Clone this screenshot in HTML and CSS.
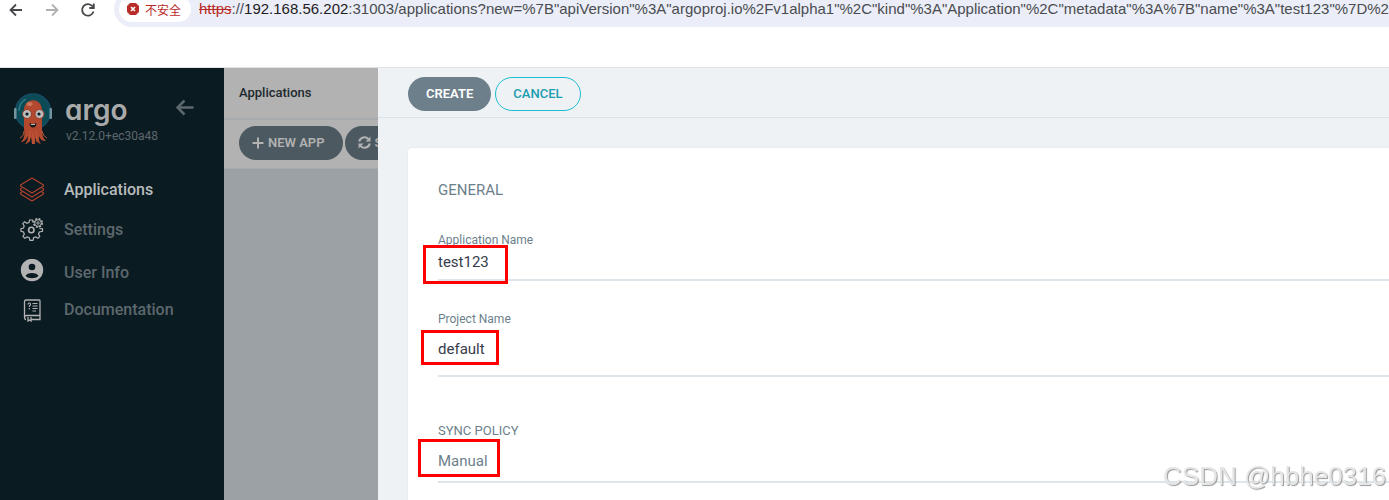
FILE: index.html
```html
<!DOCTYPE html>
<html lang="zh-CN">
<head>
<meta charset="utf-8">
<title>Applications</title>
<link rel="stylesheet" href="styles.css">
</head>
<body>

<header class="browser-bar">
  <div class="browser-nav">
    <button class="nav-btn" aria-label="Back"><svg width="16" height="16" viewBox="0 0 16 16"><path d="M14 8H3M8 2.500L2.500 8L8 13.500" /></svg></button>
    <button class="nav-btn nav-btn-off" aria-label="Forward"><svg width="16" height="16" viewBox="0 0 16 16"><path d="M2 8H13M8 2.500L13.500 8L8 13.500" /></svg></button>
    <button class="nav-btn" aria-label="Reload"><svg width="16" height="16" viewBox="0 0 16 16"><path d="M13.500 9.500A5.800 5.800 0 1 1 12.500 4.300L13.500 5.500M13.800 1.500V6H9.300" /></svg></button>
  </div>
  <div class="omnibox">
    <button class="security-chip">
      <svg width="12" height="12" viewBox="0 0 12 12"><path d="M3.600 0h4.800L12 3.600v4.800L8.400 12H3.600L0 8.400V3.600z" fill="#b92b27" stroke="#b92b27" stroke-linejoin="round"/><path d="M4 4l4 4M8 4l-4 4" stroke="#fff" stroke-width="1.600"/></svg>
      不安全
    </button>
    <div class="url"><s>https</s>://<b>192.168.56.202</b>:31003/applications?new=%7B"apiVersion"%3A"argoproj.io%2Fv1alpha1"%2C"kind"%3A"Application"%2C"metadata"%3A%7B"name"%3A"test123"%7D%2C</div>
  </div>
</header>

<div class="app">
  <aside class="sidebar">
    <div class="brand">
      <svg class="brand-logo" width="40" height="52" viewBox="0 0 40 52">
        <circle cx="20" cy="18.500" r="17.500" fill="#0b4b55" stroke="#174c64" stroke-width="1.500"/>
        <rect x="1" y="15" width="2.500" height="11" rx="1" fill="#7393a0"/>
        <rect x="36.500" y="15" width="2.500" height="11" rx="1" fill="#7393a0"/>
        <path d="M6 18C6 12 9 8 13 6" fill="none" stroke="#2d7880" stroke-width="1.500"/>
        <path d="M11 20C9 3 31 3 29 20L29 36C29 43 31 46 33 48C29 48 27 46 26 43C26 47 26 49 28 51C25 51 23 47 22.500 44L22 51H19L18 44C17 48 15 51 12 51C14 49 15 46 15 43C13 47 11 49 8 49C11 46 12 42 11 36Z" fill="#b2482d"/>
        <path d="M11 38C11 42 9 44 7 45M29 38C30 42 32 44 34 45M17 38L16 49M23 38L24 49M20 40V51" fill="none" stroke="#c15b3d" stroke-width="1"/>
        <ellipse cx="16.500" cy="11" rx="3" ry="2" fill="#c87659"/>
        <circle cx="14" cy="21" r="4.500" fill="#bbb" stroke="#963b27"/>
        <circle cx="26.500" cy="21" r="4.500" fill="#bbb" stroke="#963b27"/>
        <circle cx="14" cy="21" r="1.600" fill="#0b1b22"/>
        <circle cx="26" cy="21" r="1.600" fill="#0b1b22"/>
        <path d="M16.500 30Q20 32 23.500 30Q23 34.500 20 34.500T16.500 30Z" fill="#13191b"/>
        <path d="M18 31H22V32H18Z" fill="#b9b9b9"/>
      </svg>
      <div class="brand-text">
        <span class="brand-name">argo</span>
        <span class="brand-version">v2.12.0+ec30a48</span>
      </div>
      <button class="collapse" aria-label="Collapse"><svg width="18" height="16" viewBox="0 0 18 16"><path d="M17.500 7.500H2M8.500 0.500L1.500 7.500L8.500 14.500" fill="none" stroke="#5d686d" stroke-width="2.500"/></svg></button>
    </div>
    <nav class="menu">
      <a href="#" class="menu-item menu-item-active">
        <svg width="26" height="26" viewBox="0 0 26 26" fill="none" stroke="#b1442e" stroke-width="1.100" stroke-linejoin="round"><path d="M13 2L24.500 9V10L13 17L1.500 10V9ZM1.500 12.500V14L13 21L24.500 14V12.500M1.500 16.500V18L13 25L24.500 18V16.500M3 12L1.500 13M23 12L24.500 13M3 16L1.500 17M23 16L24.500 17"/></svg>
        Applications
      </a>
      <a href="#" class="menu-item">
        <svg width="26" height="26" viewBox="0 0 26 26" fill="none" stroke="#b3b3b3" stroke-width="1.200"><path d="M14 6.500L13.500 4H10.500L10 6.500L8 7.300L5.500 5.800L3.800 7.500L5.200 10L4.500 12L2 12.700V15.300L4.500 16L5.300 18.200L4 20.500L5.800 22.300L8.200 21L10.200 21.800L11 24.300H14L14.600 21.800L16.800 21L19 22.300L20.800 20.500L19.500 18.200L20.300 16L23.500 15.300V12.800L20.500 12.500"/><circle cx="12.300" cy="14" r="2.700" stroke-width="1.600"/><circle cx="19" cy="7" r="4.200" stroke-dasharray="2 1.300" stroke-width="1.600"/><circle cx="19" cy="7" r="3.300" stroke-width="1"/><circle cx="19" cy="7" r="1.200" stroke-width="1"/></svg>
        Settings
      </a>
      <a href="#" class="menu-item menu-item-user">
        <svg width="26" height="26" viewBox="0 0 26 26"><circle cx="13" cy="11" r="11.200" fill="#b3b3b3"/><circle cx="13" cy="8" r="3.300" fill="#0b1b22"/><path d="M6.500 17C8 13 18 13 19.500 17C16 20 10 20 6.500 17Z" fill="#0b1b22"/></svg>
        User Info
      </a>
      <a href="#" class="menu-item menu-item-docs">
        <svg width="26" height="26" viewBox="0 0 26 26" fill="none" stroke="#b3b3b3" stroke-width="1.300"><path d="M7 23.500Q5.500 23.500 5.500 21V5.500Q5.500 4 7 4H20Q21 4 21 5V23.500H12M5.500 21Q6 19.500 7.500 19.500H21"/><path d="M9 21V25L10.500 24L12 25V21" /><path d="M9 8.500Q9 7 10.300 7T11.500 8.500Q11.500 9.500 10.300 10V11M10.300 12V13.500M13.500 7.500H18.500M13.500 10H18.500M13.500 12.500H18.500M13.500 15H17" stroke-width="1.100"/></svg>
        Documentation
      </a>
    </nav>
  </aside>

  <main class="page">
    <div class="page-title">Applications</div>
    <div class="page-tools">
      <button class="btn btn-dim"><svg width="12" height="12" viewBox="0 0 12 12"><path d="M6 0.500V11.500M0.500 6H11.500" stroke="#b2b2b2" stroke-width="2"/></svg>NEW APP</button>
      <button class="btn btn-dim"><svg width="13" height="13" viewBox="0 0 13 13"><path d="M1.200 5.500A5.300 5.300 0 0 1 10.500 3.200M11.800 7.500A5.300 5.300 0 0 1 2.500 9.800" fill="none" stroke="#b2b2b2" stroke-width="2"/><path d="M12.500 0.500V5.500H7.500ZM0.500 12.500V7.500H5.500Z" fill="#b2b2b2"/></svg>SYNC APPS</button>
    </div>
  </main>

  <section class="panel">
    <div class="panel-header">
      <button class="btn btn-base">CREATE</button>
      <button class="btn btn-outline">CANCEL</button>
    </div>
    <form class="card">
      <h4 class="card-title">GENERAL</h4>
      <div class="field">
        <label for="app-name">Application Name</label>
        <input id="app-name" type="text" value="test123">
        <span class="mark mark-name"></span>
      </div>
      <div class="field field-project">
        <label for="project">Project Name</label>
        <input id="project" type="text" value="default">
        <span class="mark mark-project"></span>
      </div>
      <div class="field field-sync">
        <label for="sync">SYNC POLICY</label>
        <select id="sync"><option>Manual</option><option>Automatic</option></select>
        <span class="mark mark-sync"></span>
      </div>
    </form>
  </section>
</div>

<div class="watermark">CSDN @hbhe0316</div>

</body>
</html>
```

FILE: styles.css
```css
* {
  box-sizing: border-box;
}

body {
  margin: 0;
  height: 100vh;
  overflow: hidden;
  display: flex;
  flex-direction: column;
  background: #fff;
  font-family: Roboto, "Noto Sans CJK SC", sans-serif;
}

button, input, select {
  font-family: inherit;
  margin: 0;
}

button {
  border: none;
  background: none;
  padding: 0;
}

svg {
  flex: none;
}

/* browser toolbar */
.browser-bar {
  flex: none;
  height: 68px;
  display: flex;
  align-items: flex-start;
  border-bottom: 1px solid #dde4e6;
  overflow: hidden;
}

.browser-nav {
  display: flex;
  gap: 20px;
  padding: 2px 18px 0 8px;
}

.nav-btn {
  display: flex;
  width: 16px;
}

.nav-btn path {
  fill: none;
  stroke: #46484b;
  stroke-width: 1.8;
}

.nav-btn-off path {
  stroke: #b0b1b3;
}

.omnibox {
  flex: 1;
  min-width: 0;
  height: 36px;
  margin-top: -9px;
  padding-left: 5px;
  display: flex;
  align-items: center;
  gap: 8px;
  border-radius: 18px 0 0 18px;
  background: #ebeef8;
}

.security-chip {
  flex: none;
  display: flex;
  align-items: center;
  gap: 6px;
  width: 72px;
  height: 26px;
  padding-left: 8px;
  border-radius: 13px;
  background: #fff;
  color: #b92b27;
  font-size: 12px;
  white-space: nowrap;
}

.url {
  flex: 1;
  overflow: hidden;
  white-space: nowrap;
  font-family: "Liberation Sans", sans-serif;
  font-size: 15px;
  line-height: 20px;
  color: #4a4c50;
}

.url s {
  color: #b92b27;
}

.url b {
  font-weight: normal;
  color: #1f2023;
}

/* sidebar */
.app {
  flex: 1;
  min-height: 0;
  display: flex;
}

.sidebar {
  flex: none;
  width: 224px;
  background: #0b1b22;
}

.brand {
  display: flex;
  align-items: flex-start;
  padding: 25px 30px 0 13px;
}

.brand-text {
  display: flex;
  flex-direction: column;
  flex: 1;
  padding-left: 12px;
}

.brand-name {
  font-family: Inter, sans-serif;
  font-feature-settings: "cv11";
  font-weight: 600;
  font-size: 28px;
  line-height: 34px;
  color: #a9aaaa;
}

.brand-version {
  padding-left: 1px;
  font-size: 12px;
  line-height: 18px;
  color: #5d686d;
}

.collapse {
  display: flex;
  padding-top: 7px;
}

.menu {
  padding: 24px 0 0 19px;
}

.menu-item {
  display: flex;
  align-items: center;
  gap: 19px;
  height: 40px;
  font-size: 16px;
  font-weight: 500;
  color: #5d686d;
  text-decoration: none;
}

.menu-item-active {
  color: #b8bcbd;
}

.menu-item-user {
  height: 46px;
}

.menu-item-docs {
  height: 28px;
}

/* applications page behind the panel */
.page {
  flex: none;
  width: 154px;
  overflow: hidden;
  background: #9ba1a5;
}

.page-title {
  height: 52px;
  padding-left: 15px;
  border-bottom: 2px solid #a6aaac;
  background: #b2b2b2;
  font-size: 13px;
  font-weight: 500;
  line-height: 50px;
  color: #20292e;
}

.page-tools {
  display: flex;
  gap: 2px;
  height: 49px;
  padding: 6px 0 0 15px;
  border-bottom: 1px solid #a6aaac;
  background: #b2b2b2;
}

.btn {
  flex: none;
  display: flex;
  align-items: center;
  gap: 4px;
  height: 34px;
  padding: 0 18px 2px;
  border-radius: 17px;
  font-size: 13px;
  font-weight: 500;
  white-space: nowrap;
}

.btn-dim {
  padding: 0 18px 1px 13px;
  background: #4c5961;
  color: #b2b2b2;
  font-weight: 600;
}

.btn-base {
  background: #6d7f8b;
  color: #fff;
  font-weight: 600;
}

.btn-outline {
  padding: 0 17px 2px;
  border: 1px solid #1fbdd0;
  color: #1c9cb0;
}

/* sliding panel */
.panel {
  flex: 1;
  min-width: 0;
  display: flex;
  flex-direction: column;
  background: #eef2f5;
}

.panel-header {
  flex: none;
  display: flex;
  gap: 4px;
  height: 50px;
  padding: 9px 30px 0;
  border-bottom: 1px solid #d8e2e8;
}

.card {
  flex: 1;
  margin: 30px 0 0 30px;
  padding: 30px 0 0 30px;
  border-radius: 4px 0 0 0;
  background: #fff;
  box-shadow: 0 0 2px #dde4e9;
}

.card-title {
  margin: 0 0 30px;
  font-size: 15px;
  font-weight: normal;
  line-height: 24px;
  color: #6d7f8b;
}

.field {
  position: relative;
  display: flex;
  flex-direction: column;
  margin-bottom: 30px;
}

.field label {
  font-size: 12px;
  line-height: 16px;
  color: #6d7f8b;
}

.field input,
.field select {
  height: 33px;
  padding: 0 0 4px;
  border: none;
  border-bottom: 2px solid #dee6eb;
  border-radius: 0;
  outline: none;
  appearance: none;
  background: none;
  font-size: 15px;
  color: #363c4a;
}

.field-project {
  margin-bottom: 46px;
}

.field-project input {
  height: 50px;
}

.field-sync label {
  font-size: 13px;
}

.field-sync select {
  height: 44px;
  padding: 1px 0 0;
  color: #6d7f8b;
}

/* red frames over the filled values */
.mark {
  position: absolute;
  border: 3px solid #f00;
  pointer-events: none;
}

.mark-name {
  left: -15px;
  top: 13px;
  width: 85px;
  height: 39px;
}

.mark-project {
  left: -17px;
  top: 19px;
  width: 78px;
  height: 35px;
}

.mark-sync {
  left: -20px;
  top: 16px;
  width: 82px;
  height: 38px;
}

.watermark {
  position: fixed;
  right: 3px;
  bottom: 9px;
  font-family: "Liberation Sans", sans-serif;
  font-size: 26px;
  line-height: 30px;
  color: #e6e6e6;
  text-shadow: 1px 1px 1px #999;
}
```
